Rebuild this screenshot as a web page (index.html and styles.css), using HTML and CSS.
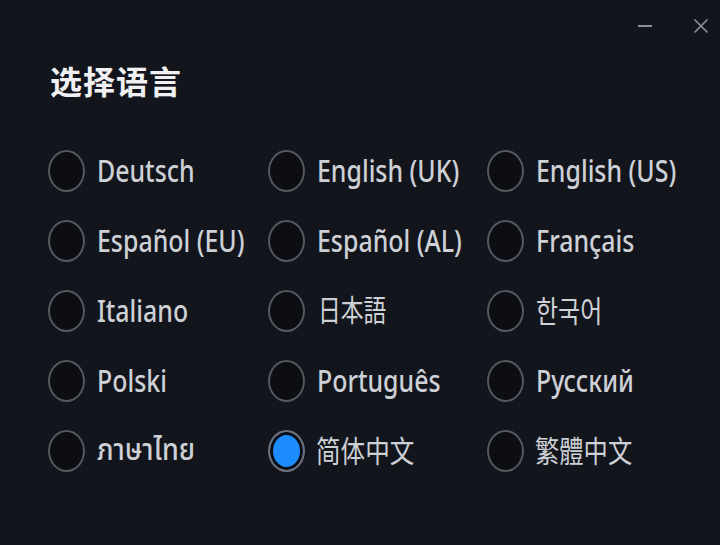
FILE: index.html
```html
<!DOCTYPE html>
<html lang="zh-CN">
<head>
<meta charset="utf-8">
<title>选择语言</title>
<link rel="stylesheet" href="styles.css">
</head>
<body>
<div class="window">
  <div class="titlebar">
    <button class="ctrl" aria-label="minimize">
      <svg width="16" height="16" viewBox="0 0 16 16"><path d="M1 8h14" stroke="#8e9199" stroke-width="2"/></svg>
    </button>
    <button class="ctrl" aria-label="close">
      <svg width="16" height="16" viewBox="0 0 16 16"><path d="M1.5 1.5l13 13M14.5 1.5l-13 13" stroke="#8e9199" stroke-width="1.6"/></svg>
    </button>
  </div>
  <h1 class="title">选择语言</h1>
  <div class="grid">
    <label class="opt"><span class="radio"></span><span class="txt" lang="de">Deutsch</span></label>
    <label class="opt"><span class="radio"></span><span class="txt" lang="en">English (UK)</span></label>
    <label class="opt"><span class="radio"></span><span class="txt" lang="en">English (US)</span></label>
    <label class="opt"><span class="radio"></span><span class="txt" lang="es">Español (EU)</span></label>
    <label class="opt"><span class="radio"></span><span class="txt" lang="es">Español (AL)</span></label>
    <label class="opt"><span class="radio"></span><span class="txt" lang="fr">Français</span></label>
    <label class="opt"><span class="radio"></span><span class="txt" lang="it">Italiano</span></label>
    <label class="opt"><span class="radio"></span><span class="txt cjk jp" lang="ja">日本語</span></label>
    <label class="opt"><span class="radio"></span><span class="txt cjk kr" lang="ko">한국어</span></label>
    <label class="opt"><span class="radio"></span><span class="txt" lang="pl">Polski</span></label>
    <label class="opt"><span class="radio"></span><span class="txt" lang="pt">Português</span></label>
    <label class="opt"><span class="radio"></span><span class="txt" lang="ru">Русский</span></label>
    <label class="opt"><span class="radio"></span><span class="txt th" lang="th">ภาษาไทย</span></label>
    <label class="opt"><span class="radio checked"></span><span class="txt cjk sc" lang="zh-CN">简体中文</span></label>
    <label class="opt"><span class="radio"></span><span class="txt cjk tc" lang="zh-TW">繁體中文</span></label>
  </div>
</div>
</body>
</html>
```

FILE: styles.css
```css
html, body {
  margin: 0;
  padding: 0;
}
body {
  width: 720px;
  height: 545px;
  overflow: hidden;
  background: #13151d;
  font-family: "Noto Sans", "Noto Sans CJK SC", sans-serif;
}
.window {
  width: 720px;
  height: 545px;
  display: flex;
  flex-direction: column;
}
.titlebar {
  height: 52px;
  display: flex;
  justify-content: flex-end;
  align-items: center;
  gap: 38px;
  padding-right: 10px;
  box-sizing: border-box;
}
.ctrl {
  width: 18px;
  height: 18px;
  padding: 0;
  border: 0;
  background: none;
  display: flex;
  align-items: center;
  justify-content: center;
}
.title {
  margin: 8px 0 0 50px;
  font-family: "Noto Sans CJK SC", sans-serif;
  font-size: 32px;
  line-height: 40px;
  font-weight: 700;
  color: #f1f1f3;
  letter-spacing: 1px;
}
.grid {
  margin: 50px 0 0 48px;
  display: grid;
  grid-template-columns: repeat(3, 219.5px);
  grid-auto-rows: 42px;
  row-gap: 28px;
}
.opt {
  display: flex;
  align-items: center;
  gap: 12px;
  white-space: nowrap;
}
.radio {
  flex: none;
  width: 37px;
  height: 42px;
  box-sizing: border-box;
  border: 2px solid #55585f;
  border-radius: 50%;
  background: #0c0e13;
}
.radio.checked {
  border-color: #6d7077;
  background: #1c8cff;
  box-shadow: inset 0 0 0 3px #0c0e13;
}
.txt {
  display: inline-block;
  font-size: 30px;
  line-height: 40px;
  font-weight: 500;
  color: #cdd0d5;
  transform: scaleX(0.83);
  transform-origin: left center;
}
.cjk {
  font-weight: 400;
  transform: translate(-1px, -2px) scaleX(0.82);
}
.jp { font-family: "Noto Sans CJK JP", sans-serif; transform: translate(1px, -3px) scaleX(0.76); }
.kr { font-family: "Noto Sans CJK KR", sans-serif; transform: translate(0, -2px) scaleX(0.8); }
.sc { font-family: "Noto Sans CJK SC", sans-serif; }
.tc { font-family: "Noto Sans CJK TC", sans-serif; transform: translate(-1px, -2px) scaleX(0.81); }
.th { font-family: "Noto Sans Thai", "Noto Sans", sans-serif; transform: scaleX(0.9); }
```
